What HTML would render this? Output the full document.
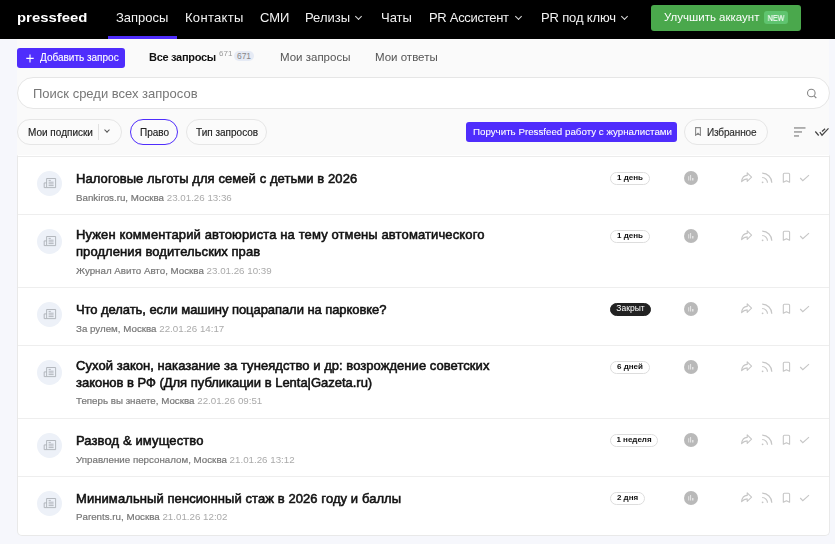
<!DOCTYPE html>
<html><head><meta charset="utf-8">
<style>
*{box-sizing:border-box;margin:0;padding:0}
html,body{width:835px;height:544px;overflow:hidden;background:#f6f7fc;font-family:"Liberation Sans",sans-serif}
.a{position:absolute;white-space:nowrap}
#hdr{position:absolute;left:0;top:0;width:835px;height:39px;background:#000}
.nav{position:absolute;top:10px;font-size:13px;color:#f2f2f2;line-height:16px}
.chev{position:absolute;width:5px;height:5px;border-right:1.2px solid #ddd;border-bottom:1.2px solid #ddd;transform:rotate(45deg)}
#panel{position:absolute;left:17px;top:39px;width:812px;height:117px;background:#fafafa}
.chip{position:absolute;top:119px;height:26px;border:1px solid #e6e6e6;border-radius:13px;background:#fbfbfb}
.ctext{position:absolute;font-size:10px;color:#222;line-height:12px;top:127px;-webkit-text-stroke:0.15px #222}
#card{position:absolute;left:17px;top:155px;width:813px;height:381px;background:#fff;border:1px solid #e9e9e9;border-top-color:#fff;border-radius:0 0 5px 5px}
#ctop{position:absolute;left:18px;top:156px;width:811px;height:1px;background:#ececec}
.sep{position:absolute;left:18px;width:811px;height:1px;background:#eeeeee}
.ic{position:absolute;left:36.5px;width:25px;height:25px;border-radius:50%;background:#edf1f8}
.title{position:absolute;left:76px;font-size:13px;line-height:17px;color:#111;-webkit-text-stroke:0.55px #111;white-space:nowrap}
.meta{position:absolute;left:76px;font-size:9.75px;line-height:12px;color:#777;white-space:nowrap;-webkit-text-stroke:0.2px #777}
.meta span{color:#aaa;-webkit-text-stroke:0}
.bdg{position:absolute;left:610px;height:13px;border:1px solid #ddd;border-radius:7px;font-size:8px;font-weight:bold;line-height:9.5px;color:#111;text-align:center}
.gc{position:absolute;left:684px;width:14px;height:14px;border-radius:50%;background:#b9b9b9}
.acts{position:absolute;left:740px;width:72px;height:12px}
.title,.meta,.nav,.a,.ctext,.bdg{will-change:transform}
</style></head><body>
<div id="hdr"></div>
<div class="a" style="left:17px;top:9px;font-size:12px;font-weight:bold;color:#fff;line-height:18px;transform:scaleX(1.24);transform-origin:0 0">pressfeed</div>
<div class="nav" style="left:116px">Запросы</div>
<div style="position:absolute;left:108px;top:36px;width:69px;height:3px;background:#4f2dfc"></div>
<div class="nav" style="left:185px;letter-spacing:0.3px">Контакты</div>
<div class="nav" style="left:260px">СМИ</div>
<div class="nav" style="left:305px">Релизы</div>
<div class="chev" style="left:356px;top:14px"></div>
<div class="nav" style="left:381px">Чаты</div>
<div class="nav" style="left:429px;letter-spacing:-0.3px">PR Ассистент</div>
<div class="chev" style="left:516px;top:14px"></div>
<div class="nav" style="left:541px;letter-spacing:-0.15px">PR под ключ</div>
<div class="chev" style="left:622px;top:14px"></div>
<div style="position:absolute;left:651px;top:5px;width:150px;height:26px;background:#4aa84c;border-radius:3px"></div>
<div class="a" style="left:664px;top:9.5px;font-size:11.5px;line-height:14px;color:#fff">Улучшить аккаунт</div>
<div style="position:absolute;left:764px;top:11px;width:24px;height:13px;background:#5fc46f;border-radius:3px"></div><div style="position:absolute;left:764px;top:12px;width:24px;height:13px;color:#fff;font-size:8.5px;text-align:center;line-height:13px;transform:scaleX(0.83);will-change:transform;-webkit-text-stroke:0.15px #fff">NEW</div>

<div id="panel"></div>
<div style="position:absolute;left:17px;top:48px;width:108px;height:20px;background:#4f2dfc;border-radius:3px"></div>
<svg style="position:absolute;left:26px;top:54px" width="8" height="9" viewBox="0 0 8 9"><path d="M4 0.5V8.5M0.3 4.4H7.7" stroke="#fff" stroke-width="1.1"/></svg>
<div class="a" style="left:40px;top:52px;color:#fff;font-size:10px;line-height:12px;-webkit-text-stroke:0.1px #fff">Добавить запрос</div>
<div class="a" style="left:149px;top:51px;font-size:11px;font-weight:bold;letter-spacing:-0.3px;color:#111;line-height:13px">Все запросы</div>
<div class="a" style="left:218.5px;top:50px;font-size:8px;color:#999;line-height:8px">671</div>
<div style="position:absolute;left:234px;top:51px;width:20px;height:10px;background:#e6ebf5;border-radius:5px;font-size:8.5px;color:#888;text-align:center;line-height:10px;font-family:'Liberation Sans'">671</div>
<div class="a" style="left:280px;top:51px;font-size:11.5px;color:#555;line-height:13px">Мои запросы</div>
<div class="a" style="left:375px;top:51px;font-size:11.5px;color:#555;line-height:13px">Мои ответы</div>

<div style="position:absolute;left:17px;top:77px;width:813px;height:32px;background:#fff;border:1px solid #e6e6e6;border-radius:16px"></div>
<div class="a" style="left:33px;top:86px;font-size:13px;color:#777;line-height:15px">Поиск среди всех запросов</div>
<svg style="position:absolute;left:806px;top:88px" width="12" height="11" viewBox="0 0 12 11"><circle cx="5.3" cy="5" r="3.8" fill="none" stroke="#888" stroke-width="1.1"/><line x1="8" y1="7.8" x2="10.3" y2="10" stroke="#888" stroke-width="1.1"/></svg>

<div class="chip" style="left:17px;width:105px"></div>
<div style="position:absolute;left:98px;top:124px;width:1px;height:16px;background:#e2e2e2"></div>
<div class="chev" style="left:105px;top:128px;border-color:#555;width:4px;height:4px;border-width:0 1px 1px 0"></div>
<div class="ctext" style="left:28px">Мои подписки</div>
<div class="chip" style="left:130px;width:48px;border:1.5px solid #4f2dfc"></div>
<div class="ctext" style="left:140px">Право</div>
<div class="chip" style="left:186px;width:81px"></div>
<div class="ctext" style="left:196px">Тип запросов</div>

<div style="position:absolute;left:466px;top:122px;width:211px;height:20px;background:#4f2dfc;border-radius:3px"></div>
<div class="a" style="left:473px;top:126px;color:#fff;font-size:9.75px;line-height:12px;-webkit-text-stroke:0.08px #fff">Поручить Pressfeed работу с журналистами</div>
<div class="chip" style="left:684px;width:84px"></div>
<svg style="position:absolute;left:695px;top:127px" width="6" height="9" viewBox="0 0 6 9"><path d="M0.6 0.6H5.4V8.3L3 6.3L0.6 8.3Z" fill="none" stroke="#888" stroke-width="1.1"/></svg>
<div class="ctext" style="left:707px;letter-spacing:-0.15px;color:#333">Избранное</div>
<svg style="position:absolute;left:793px;top:126px" width="14" height="12" viewBox="0 0 14 12"><rect x="1" y="1.2" width="11.5" height="1.5" fill="#9a9a9a"/><rect x="1" y="5.2" width="8" height="1.5" fill="#9a9a9a"/><rect x="1" y="9.2" width="5" height="1.5" fill="#9a9a9a"/></svg>
<svg style="position:absolute;left:814px;top:127px" width="16" height="10" viewBox="0 0 16 10"><path d="M1.3 4.5L4.7 8.5M8 4.5L11.1 1.7M5.8 5.2L8 8.2L14.5 1.3" fill="none" stroke="#444" stroke-width="1.2"/></svg>

<div id="card"></div><div id="ctop"></div>
<div class="sep" style="top:214px"></div>
<div class="sep" style="top:287px"></div>
<div class="sep" style="top:345px"></div>
<div class="sep" style="top:418px"></div>
<div class="sep" style="top:476px"></div>

<!-- rows -->
<div class="ic" style="top:171.0px"><svg width="25" height="25" viewBox="0 0 25 25"><path d="M9.6 7.5H18.6V16.6H9.6ZM9.6 11.9H7.2V16.6H9.6" fill="none" stroke="#a9adb4" stroke-width="0.85"/><path d="M11.6 9.4H13.8M11.6 11.2H16.6M11.6 12.9H16.6M11.6 14.6H16.6" stroke="#a9adb4" stroke-width="0.85"/></svg></div>
<div class="title" style="top:170px"><span style="letter-spacing:0.075px">Налоговые льготы для семей с детьми в 2026</span></div>
<div class="meta" style="top:192px">Bankiros.ru, Москва <span>23.01.26 13:36</span></div>
<div class="bdg" style="top:171.5px;width:40px">1 день</div>
<div class="gc" style="top:171px"><svg width="14" height="14" viewBox="0 0 14 14"><rect x="4.2" y="5.2" width="1" height="4.3" fill="#fff" opacity=".6"/><rect x="6" y="4" width="1.1" height="5.5" fill="#fff" opacity=".6"/><rect x="8" y="7" width="1.5" height="2.5" fill="#fff" opacity=".6"/></svg></div>
<svg class="acts" style="top:172px" width="72" height="12" viewBox="0 0 72 12"><path d="M1.6 9.6C2 6 4.2 3.6 7.2 3.4V0.9L11.6 5.2L7.2 9.3V6.9C4.9 6.9 3.2 7.8 1.6 9.6Z" fill="none" stroke="#c6c6c6" stroke-width="1.1" stroke-linejoin="round"/><path d="M22.2 1.2A9.6 9.6 0 0 1 31.8 10.8M22.2 5.5A5.3 5.3 0 0 1 27.5 10.8" fill="none" stroke="#c6c6c6" stroke-width="1.2"/><circle cx="22.6" cy="10.3" r="0.9" fill="#c6c6c6"/><path d="M43.3 10.3V2.3Q43.3 1.2 44.4 1.2H48.5Q49.6 1.2 49.6 2.3V10.3L46.45 8.7Z" fill="none" stroke="#c6c6c6" stroke-width="1.1" stroke-linejoin="round"/><path d="M60.2 6L62.8 8.7L69 3.2" fill="none" stroke="#c6c6c6" stroke-width="1.1"/></svg>
<div class="ic" style="top:229.0px"><svg width="25" height="25" viewBox="0 0 25 25"><path d="M9.6 7.5H18.6V16.6H9.6ZM9.6 11.9H7.2V16.6H9.6" fill="none" stroke="#a9adb4" stroke-width="0.85"/><path d="M11.6 9.4H13.8M11.6 11.2H16.6M11.6 12.9H16.6M11.6 14.6H16.6" stroke="#a9adb4" stroke-width="0.85"/></svg></div>
<div class="title" style="top:226px"><span style="letter-spacing:0.12px">Нужен комментарий автоюриста на тему отмены автоматического</span><br><span style="letter-spacing:0.075px">продления водительских прав</span></div>
<div class="meta" style="top:265px">Журнал Авито Авто, Москва <span>23.01.26 10:39</span></div>
<div class="bdg" style="top:229.5px;width:40px">1 день</div>
<div class="gc" style="top:229px"><svg width="14" height="14" viewBox="0 0 14 14"><rect x="4.2" y="5.2" width="1" height="4.3" fill="#fff" opacity=".6"/><rect x="6" y="4" width="1.1" height="5.5" fill="#fff" opacity=".6"/><rect x="8" y="7" width="1.5" height="2.5" fill="#fff" opacity=".6"/></svg></div>
<svg class="acts" style="top:230px" width="72" height="12" viewBox="0 0 72 12"><path d="M1.6 9.6C2 6 4.2 3.6 7.2 3.4V0.9L11.6 5.2L7.2 9.3V6.9C4.9 6.9 3.2 7.8 1.6 9.6Z" fill="none" stroke="#c6c6c6" stroke-width="1.1" stroke-linejoin="round"/><path d="M22.2 1.2A9.6 9.6 0 0 1 31.8 10.8M22.2 5.5A5.3 5.3 0 0 1 27.5 10.8" fill="none" stroke="#c6c6c6" stroke-width="1.2"/><circle cx="22.6" cy="10.3" r="0.9" fill="#c6c6c6"/><path d="M43.3 10.3V2.3Q43.3 1.2 44.4 1.2H48.5Q49.6 1.2 49.6 2.3V10.3L46.45 8.7Z" fill="none" stroke="#c6c6c6" stroke-width="1.1" stroke-linejoin="round"/><path d="M60.2 6L62.8 8.7L69 3.2" fill="none" stroke="#c6c6c6" stroke-width="1.1"/></svg>
<div class="ic" style="top:302.0px"><svg width="25" height="25" viewBox="0 0 25 25"><path d="M9.6 7.5H18.6V16.6H9.6ZM9.6 11.9H7.2V16.6H9.6" fill="none" stroke="#a9adb4" stroke-width="0.85"/><path d="M11.6 9.4H13.8M11.6 11.2H16.6M11.6 12.9H16.6M11.6 14.6H16.6" stroke="#a9adb4" stroke-width="0.85"/></svg></div>
<div class="title" style="top:301px"><span style="letter-spacing:-0.065px">Что делать, если машину поцарапали на парковке?</span></div>
<div class="meta" style="top:323px">За рулем, Москва <span>22.01.26 14:17</span></div>
<div class="bdg" style="top:302.5px;width:41px;background:#222;border-color:#222;color:#fff;font-weight:normal;font-size:8.5px">Закрыт</div>
<div class="gc" style="top:302px"><svg width="14" height="14" viewBox="0 0 14 14"><rect x="4.2" y="5.2" width="1" height="4.3" fill="#fff" opacity=".6"/><rect x="6" y="4" width="1.1" height="5.5" fill="#fff" opacity=".6"/><rect x="8" y="7" width="1.5" height="2.5" fill="#fff" opacity=".6"/></svg></div>
<svg class="acts" style="top:303px" width="72" height="12" viewBox="0 0 72 12"><path d="M1.6 9.6C2 6 4.2 3.6 7.2 3.4V0.9L11.6 5.2L7.2 9.3V6.9C4.9 6.9 3.2 7.8 1.6 9.6Z" fill="none" stroke="#c6c6c6" stroke-width="1.1" stroke-linejoin="round"/><path d="M22.2 1.2A9.6 9.6 0 0 1 31.8 10.8M22.2 5.5A5.3 5.3 0 0 1 27.5 10.8" fill="none" stroke="#c6c6c6" stroke-width="1.2"/><circle cx="22.6" cy="10.3" r="0.9" fill="#c6c6c6"/><path d="M43.3 10.3V2.3Q43.3 1.2 44.4 1.2H48.5Q49.6 1.2 49.6 2.3V10.3L46.45 8.7Z" fill="none" stroke="#c6c6c6" stroke-width="1.1" stroke-linejoin="round"/><path d="M60.2 6L62.8 8.7L69 3.2" fill="none" stroke="#c6c6c6" stroke-width="1.1"/></svg>
<div class="ic" style="top:360.0px"><svg width="25" height="25" viewBox="0 0 25 25"><path d="M9.6 7.5H18.6V16.6H9.6ZM9.6 11.9H7.2V16.6H9.6" fill="none" stroke="#a9adb4" stroke-width="0.85"/><path d="M11.6 9.4H13.8M11.6 11.2H16.6M11.6 12.9H16.6M11.6 14.6H16.6" stroke="#a9adb4" stroke-width="0.85"/></svg></div>
<div class="title" style="top:357px"><span style="letter-spacing:0.047px">Сухой закон, наказание за тунеядство и др: возрождение советских</span><br><span style="letter-spacing:-0.02px">законов в РФ (Для публикации в Lenta|Gazeta.ru)</span></div>
<div class="meta" style="top:395px">Теперь вы знаете, Москва <span>22.01.26 09:51</span></div>
<div class="bdg" style="top:360.5px;width:40px">6 дней</div>
<div class="gc" style="top:360px"><svg width="14" height="14" viewBox="0 0 14 14"><rect x="4.2" y="5.2" width="1" height="4.3" fill="#fff" opacity=".6"/><rect x="6" y="4" width="1.1" height="5.5" fill="#fff" opacity=".6"/><rect x="8" y="7" width="1.5" height="2.5" fill="#fff" opacity=".6"/></svg></div>
<svg class="acts" style="top:361px" width="72" height="12" viewBox="0 0 72 12"><path d="M1.6 9.6C2 6 4.2 3.6 7.2 3.4V0.9L11.6 5.2L7.2 9.3V6.9C4.9 6.9 3.2 7.8 1.6 9.6Z" fill="none" stroke="#c6c6c6" stroke-width="1.1" stroke-linejoin="round"/><path d="M22.2 1.2A9.6 9.6 0 0 1 31.8 10.8M22.2 5.5A5.3 5.3 0 0 1 27.5 10.8" fill="none" stroke="#c6c6c6" stroke-width="1.2"/><circle cx="22.6" cy="10.3" r="0.9" fill="#c6c6c6"/><path d="M43.3 10.3V2.3Q43.3 1.2 44.4 1.2H48.5Q49.6 1.2 49.6 2.3V10.3L46.45 8.7Z" fill="none" stroke="#c6c6c6" stroke-width="1.1" stroke-linejoin="round"/><path d="M60.2 6L62.8 8.7L69 3.2" fill="none" stroke="#c6c6c6" stroke-width="1.1"/></svg>
<div class="ic" style="top:433.0px"><svg width="25" height="25" viewBox="0 0 25 25"><path d="M9.6 7.5H18.6V16.6H9.6ZM9.6 11.9H7.2V16.6H9.6" fill="none" stroke="#a9adb4" stroke-width="0.85"/><path d="M11.6 9.4H13.8M11.6 11.2H16.6M11.6 12.9H16.6M11.6 14.6H16.6" stroke="#a9adb4" stroke-width="0.85"/></svg></div>
<div class="title" style="top:432px"><span style="letter-spacing:0.11px">Развод &amp; имущество</span></div>
<div class="meta" style="top:454px">Управление персоналом, Москва <span>21.01.26 13:12</span></div>
<div class="bdg" style="top:433.5px;width:48px">1 неделя</div>
<div class="gc" style="top:433px"><svg width="14" height="14" viewBox="0 0 14 14"><rect x="4.2" y="5.2" width="1" height="4.3" fill="#fff" opacity=".6"/><rect x="6" y="4" width="1.1" height="5.5" fill="#fff" opacity=".6"/><rect x="8" y="7" width="1.5" height="2.5" fill="#fff" opacity=".6"/></svg></div>
<svg class="acts" style="top:434px" width="72" height="12" viewBox="0 0 72 12"><path d="M1.6 9.6C2 6 4.2 3.6 7.2 3.4V0.9L11.6 5.2L7.2 9.3V6.9C4.9 6.9 3.2 7.8 1.6 9.6Z" fill="none" stroke="#c6c6c6" stroke-width="1.1" stroke-linejoin="round"/><path d="M22.2 1.2A9.6 9.6 0 0 1 31.8 10.8M22.2 5.5A5.3 5.3 0 0 1 27.5 10.8" fill="none" stroke="#c6c6c6" stroke-width="1.2"/><circle cx="22.6" cy="10.3" r="0.9" fill="#c6c6c6"/><path d="M43.3 10.3V2.3Q43.3 1.2 44.4 1.2H48.5Q49.6 1.2 49.6 2.3V10.3L46.45 8.7Z" fill="none" stroke="#c6c6c6" stroke-width="1.1" stroke-linejoin="round"/><path d="M60.2 6L62.8 8.7L69 3.2" fill="none" stroke="#c6c6c6" stroke-width="1.1"/></svg>
<div class="ic" style="top:491.0px"><svg width="25" height="25" viewBox="0 0 25 25"><path d="M9.6 7.5H18.6V16.6H9.6ZM9.6 11.9H7.2V16.6H9.6" fill="none" stroke="#a9adb4" stroke-width="0.85"/><path d="M11.6 9.4H13.8M11.6 11.2H16.6M11.6 12.9H16.6M11.6 14.6H16.6" stroke="#a9adb4" stroke-width="0.85"/></svg></div>
<div class="title" style="top:490px"><span style="letter-spacing:0.085px">Минимальный пенсионный стаж в 2026 году и баллы</span></div>
<div class="meta" style="top:511px">Parents.ru, Москва <span>21.01.26 12:02</span></div>
<div class="bdg" style="top:491.5px;width:35px">2 дня</div>
<div class="gc" style="top:491px"><svg width="14" height="14" viewBox="0 0 14 14"><rect x="4.2" y="5.2" width="1" height="4.3" fill="#fff" opacity=".6"/><rect x="6" y="4" width="1.1" height="5.5" fill="#fff" opacity=".6"/><rect x="8" y="7" width="1.5" height="2.5" fill="#fff" opacity=".6"/></svg></div>
<svg class="acts" style="top:492px" width="72" height="12" viewBox="0 0 72 12"><path d="M1.6 9.6C2 6 4.2 3.6 7.2 3.4V0.9L11.6 5.2L7.2 9.3V6.9C4.9 6.9 3.2 7.8 1.6 9.6Z" fill="none" stroke="#c6c6c6" stroke-width="1.1" stroke-linejoin="round"/><path d="M22.2 1.2A9.6 9.6 0 0 1 31.8 10.8M22.2 5.5A5.3 5.3 0 0 1 27.5 10.8" fill="none" stroke="#c6c6c6" stroke-width="1.2"/><circle cx="22.6" cy="10.3" r="0.9" fill="#c6c6c6"/><path d="M43.3 10.3V2.3Q43.3 1.2 44.4 1.2H48.5Q49.6 1.2 49.6 2.3V10.3L46.45 8.7Z" fill="none" stroke="#c6c6c6" stroke-width="1.1" stroke-linejoin="round"/><path d="M60.2 6L62.8 8.7L69 3.2" fill="none" stroke="#c6c6c6" stroke-width="1.1"/></svg>
</body></html>
